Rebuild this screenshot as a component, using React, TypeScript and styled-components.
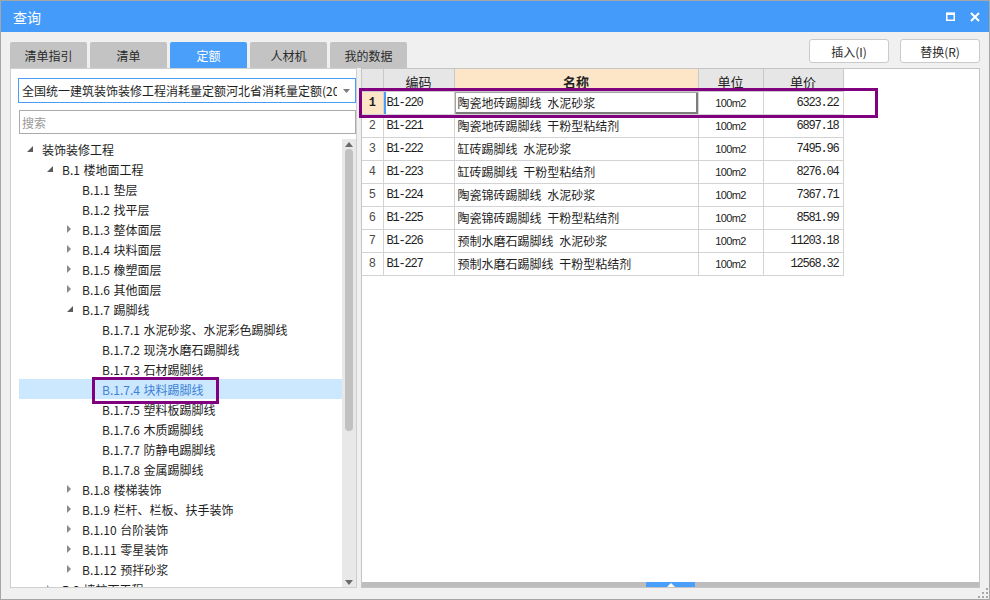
import React from 'react';
import styled, { createGlobalStyle } from 'styled-components';

const GlobalStyle = createGlobalStyle`
  html, body {
    margin: 0;
    padding: 0;
    background: #ffffff;
  }
  body {
    font-family: "Noto Sans CJK SC", "Noto Sans", sans-serif;
    font-size: 12px;
    color: #1e1e1e;
  }
  * {
    box-sizing: border-box;
  }
`;

type TreeNode = {
  label: string;
  level: number;
  toggle?: 'open' | 'closed';
  selected?: boolean;
};

const treeNodes: TreeNode[] = [
  { label: '装饰装修工程', level: 0, toggle: 'open' },
  { label: 'B.1 楼地面工程', level: 1, toggle: 'open' },
  { label: 'B.1.1 垫层', level: 2 },
  { label: 'B.1.2 找平层', level: 2 },
  { label: 'B.1.3 整体面层', level: 2, toggle: 'closed' },
  { label: 'B.1.4 块料面层', level: 2, toggle: 'closed' },
  { label: 'B.1.5 橡塑面层', level: 2, toggle: 'closed' },
  { label: 'B.1.6 其他面层', level: 2, toggle: 'closed' },
  { label: 'B.1.7 踢脚线', level: 2, toggle: 'open' },
  { label: 'B.1.7.1 水泥砂浆、水泥彩色踢脚线', level: 3 },
  { label: 'B.1.7.2 现浇水磨石踢脚线', level: 3 },
  { label: 'B.1.7.3 石材踢脚线', level: 3 },
  { label: 'B.1.7.4 块料踢脚线', level: 3, selected: true },
  { label: 'B.1.7.5 塑料板踢脚线', level: 3 },
  { label: 'B.1.7.6 木质踢脚线', level: 3 },
  { label: 'B.1.7.7 防静电踢脚线', level: 3 },
  { label: 'B.1.7.8 金属踢脚线', level: 3 },
  { label: 'B.1.8 楼梯装饰', level: 2, toggle: 'closed' },
  { label: 'B.1.9 栏杆、栏板、扶手装饰', level: 2, toggle: 'closed' },
  { label: 'B.1.10 台阶装饰', level: 2, toggle: 'closed' },
  { label: 'B.1.11 零星装饰', level: 2, toggle: 'closed' },
  { label: 'B.1.12 预拌砂浆', level: 2, toggle: 'closed' },
  { label: 'B.2 墙柱面工程', level: 1, toggle: 'closed' },
];

const quotaRows = [
  ['B1-220', '陶瓷地砖踢脚线 水泥砂浆', '100m2', '6323.22'],
  ['B1-221', '陶瓷地砖踢脚线 干粉型粘结剂', '100m2', '6897.18'],
  ['B1-222', '缸砖踢脚线 水泥砂浆', '100m2', '7495.96'],
  ['B1-223', '缸砖踢脚线 干粉型粘结剂', '100m2', '8276.04'],
  ['B1-224', '陶瓷锦砖踢脚线 水泥砂浆', '100m2', '7367.71'],
  ['B1-225', '陶瓷锦砖踢脚线 干粉型粘结剂', '100m2', '8581.99'],
  ['B1-226', '预制水磨石踢脚线 水泥砂浆', '100m2', '11203.18'],
  ['B1-227', '预制水磨石踢脚线 干粉型粘结剂', '100m2', '12568.32'],
];

const tabs = ['清单指引', '清单', '定额', '人材机', '我的数据'];

function App() {
  return (
    <>
      <GlobalStyle />
      <Dialog>
        <TitleBar>
          <Title>查询</Title>
          <TitleControls>
            <svg width="9" height="9" viewBox="0 0 9 9">
              <rect x="0.75" y="1.5" width="7.5" height="6.75" fill="none" stroke="#fff" strokeWidth="1.5" />
              <rect x="0" y="0.5" width="9" height="2.5" fill="#fff" />
            </svg>
            <svg width="10" height="10" viewBox="0 0 10 10">
              <path d="M1 1 L9 9 M9 1 L1 9" stroke="#fff" strokeWidth="2" />
            </svg>
          </TitleControls>
        </TitleBar>

        <Toolbar>
          <Tabs>
            {tabs.map((t) => (
              <Tab key={t} $active={t === '定额'}>
                {t}
              </Tab>
            ))}
          </Tabs>
          <Actions>
            <ActionButton>插入(I)</ActionButton>
            <ActionButton>替换(R)</ActionButton>
          </Actions>
        </Toolbar>

        <Content>
          <LeftPanel>
            <Combo>
              <ComboText>全国统一建筑装饰装修工程消耗量定额河北省消耗量定额(2013)</ComboText>
              <ComboArrow>
                <svg width="7" height="4" viewBox="0 0 7 4">
                  <path d="M0 0 H7 L3.5 4 Z" fill="#7a7a7a" />
                </svg>
              </ComboArrow>
            </Combo>
            <SearchBox>搜索</SearchBox>
            <TreeArea>
              <TreeList>
                {treeNodes.map((n) => (
                  <TreeRow key={n.label} $level={n.level} $selected={!!n.selected}>
                    <Toggle>
                      {n.toggle === 'open' && (
                        <svg width="6" height="6" viewBox="0 0 6 6">
                          <path d="M6 0 V6 H0 Z" fill="#5c5c5c" />
                        </svg>
                      )}
                      {n.toggle === 'closed' && (
                        <svg width="5" height="8" viewBox="0 0 5 8">
                          <path d="M0 0 L4 4 L0 8 Z" fill="#8a8a8a" />
                        </svg>
                      )}
                    </Toggle>
                    <TreeLabel>{n.label}</TreeLabel>
                  </TreeRow>
                ))}
              </TreeList>
              <VScroll>
                <ScrollArrow>
                  <svg width="8" height="5" viewBox="0 0 8 5">
                    <path d="M0 5 L4 0 L8 5 Z" fill="#6a6a6a" />
                  </svg>
                </ScrollArrow>
                <ScrollThumb />
                <ScrollTrack />
                <ScrollArrow>
                  <svg width="8" height="5" viewBox="0 0 8 5">
                    <path d="M0 0 L8 0 L4 5 Z" fill="#6a6a6a" />
                  </svg>
                </ScrollArrow>
              </VScroll>
            </TreeArea>
          </LeftPanel>

          <RightPanel>
            <Grid>
              <colgroup>
                <col style={{ width: 21 }} />
                <col style={{ width: 71 }} />
                <col style={{ width: 244 }} />
                <col style={{ width: 65 }} />
                <col style={{ width: 80 }} />
              </colgroup>
              <thead>
                <tr>
                  <HeadCell />
                  <HeadCell>编码</HeadCell>
                  <HeadCell $sorted>名称</HeadCell>
                  <HeadCell>单位</HeadCell>
                  <HeadCell>单价</HeadCell>
                </tr>
              </thead>
              <tbody>
                {quotaRows.map((r, i) => (
                  <tr key={r[0]}>
                    <NumCell $current={i === 0}>{i + 1}</NumCell>
                    <CodeCell $current={i === 0}>{r[0]}</CodeCell>
                    <NameCell $editing={i === 0}>{r[1]}</NameCell>
                    <UnitCell>{r[2]}</UnitCell>
                    <PriceCell>{r[3]}</PriceCell>
                  </tr>
                ))}
              </tbody>
            </Grid>
            <Filler />
            <SplitBar>
              <SplitHandle>
                <svg width="8" height="4" viewBox="0 0 8 4">
                  <path d="M0 4 L4 0 L8 4 Z" fill="#ffffff" />
                </svg>
              </SplitHandle>
            </SplitBar>
          </RightPanel>
        </Content>

        <Grip>
          <svg width="10" height="10" viewBox="0 0 10 10">
            <rect x="8" y="0" width="2" height="2" fill="#a8a8a8" />
            <rect x="4" y="4" width="2" height="2" fill="#a8a8a8" />
            <rect x="8" y="4" width="2" height="2" fill="#a8a8a8" />
            <rect x="0" y="8" width="2" height="2" fill="#a8a8a8" />
            <rect x="4" y="8" width="2" height="2" fill="#a8a8a8" />
            <rect x="8" y="8" width="2" height="2" fill="#a8a8a8" />
          </svg>
        </Grip>

        <Marker $left={358} $top={87} $width={519} $height={30} />
        <Marker $left={91} $top={376} $width={127} $height={27} />
      </Dialog>
    </>
  );
}

export default App;

const Dialog = styled.div`
  position: relative;
  width: 990px;
  height: 600px;
  border: 1px solid #a6a6a6;
  background: #f0f0f0;
  display: flex;
  flex-direction: column;
  overflow: hidden;
`;

const TitleBar = styled.div`
  height: 31px;
  flex: none;
  background: #459bfa;
  display: flex;
  align-items: center;
  justify-content: space-between;
  padding: 0 9px 0 12px;
`;

const Title = styled.div`
  color: #ffffff;
  font-size: 14px;
`;

const TitleControls = styled.div`
  display: flex;
  align-items: center;
  gap: 15px;
  svg {
    display: block;
  }
`;

const Toolbar = styled.div`
  height: 36px;
  flex: none;
  display: flex;
  justify-content: space-between;
  padding: 0 9px;
`;

const Tabs = styled.div`
  display: flex;
  gap: 3px;
  align-self: flex-end;
`;

const Tab = styled.div<{ $active: boolean }>`
  width: 77px;
  height: 26px;
  display: flex;
  align-items: center;
  justify-content: center;
  font-size: 12px;
  border-radius: 2px 2px 0 0;
  background: ${(p) => (p.$active ? '#4a9ffb' : '#c3c3c3')};
  color: ${(p) => (p.$active ? '#ffffff' : '#2a2a2a')};
`;

const Actions = styled.div`
  display: flex;
  gap: 11px;
  padding-top: 7px;
`;

const ActionButton = styled.div`
  width: 80px;
  height: 24px;
  display: flex;
  align-items: center;
  justify-content: center;
  background: #ffffff;
  border: 1px solid #cacaca;
  border-radius: 3px;
  font-size: 12px;
  color: #2a2a2a;
`;

const Content = styled.div`
  flex: 1;
  display: flex;
  gap: 4px;
  padding: 0 9px 11px 9px;
  min-height: 0;
`;

const LeftPanel = styled.div`
  width: 347px;
  flex: none;
  background: #ffffff;
  border: 1px solid #cfcfcf;
  display: flex;
  flex-direction: column;
  padding: 9px 0 0 7px;
  min-height: 0;
`;

const Combo = styled.div`
  height: 25px;
  border: 1px solid #4a9cf6;
  display: flex;
  align-items: center;
  padding-left: 3px;
  flex: none;
`;

const ComboText = styled.div`
  flex: 1;
  overflow: hidden;
  white-space: nowrap;
  font-size: 12px;
  color: #1e1e1e;
`;

const ComboArrow = styled.div`
  width: 18px;
  display: flex;
  justify-content: center;
  svg {
    display: block;
  }
`;

const SearchBox = styled.div`
  height: 24px;
  margin: 7px 0 0 1px;
  border: 1px solid #ababab;
  display: flex;
  align-items: center;
  padding-left: 2px;
  color: #9a9a9a;
  font-size: 12px;
  flex: none;
`;

const TreeArea = styled.div`
  flex: 1;
  display: flex;
  margin-top: 5px;
  min-height: 0;
  padding-left: 1px;
`;

const TreeList = styled.div`
  flex: 1;
  overflow: hidden;
`;

const TreeRow = styled.div<{ $level: number; $selected: boolean }>`
  height: 20px;
  display: flex;
  align-items: center;
  padding-left: ${(p) => 3 + p.$level * 20}px;
  background: ${(p) => (p.$selected ? '#cce8ff' : 'transparent')};
  color: ${(p) => (p.$selected ? '#3b82d6' : '#1e1e1e')};
  white-space: nowrap;
`;

const Toggle = styled.div`
  width: 20px;
  flex: none;
  display: flex;
  align-items: center;
  padding-left: 5px;
  svg {
    display: block;
  }
`;

const TreeLabel = styled.span`
  font-size: 12px;
  word-spacing: 1px;
`;

const VScroll = styled.div`
  width: 14px;
  flex: none;
  background: #e8e8e8;
  display: flex;
  flex-direction: column;
  align-items: center;
`;

const ScrollArrow = styled.div`
  height: 10px;
  width: 100%;
  display: flex;
  align-items: center;
  justify-content: center;
  flex: none;
  svg {
    display: block;
  }
`;

const ScrollThumb = styled.div`
  width: 8px;
  height: 282px;
  border-radius: 4px;
  background: #c1c1c1;
  flex: none;
`;

const ScrollTrack = styled.div`
  flex: 1;
`;

const RightPanel = styled.div`
  flex: 1;
  background: #ffffff;
  border: 1px solid #c4c4c4;
  display: flex;
  flex-direction: column;
  min-width: 0;
`;

const Grid = styled.table`
  border-collapse: collapse;
  table-layout: fixed;
  width: 481px;
`;

const HeadCell = styled.th<{ $sorted?: boolean }>`
  height: 22px;
  padding: 0;
  border: 1px solid #c9c9c9;
  border-top: none;
  background: ${(p) => (p.$sorted ? '#fde6c8' : '#e6e6e6')};
  font-size: 13px;
  font-weight: ${(p) => (p.$sorted ? 700 : 400)};
  color: #222222;
  text-align: center;
  vertical-align: bottom;
  line-height: 19px;
  &:first-child {
    border-left: none;
  }
`;

const BodyCell = styled.td`
  height: 23px;
  padding: 0 3px;
  border: 1px solid #d3d3d3;
  white-space: nowrap;
  overflow: hidden;
  color: #1e1e1e;
  &:first-child {
    border-left: none;
  }
`;

const NumCell = styled(BodyCell)<{ $current: boolean }>`
  padding: 0;
  text-align: center;
  font-family: "Liberation Mono", monospace;
  font-size: 12px;
  background: ${(p) => (p.$current ? '#fde6c8' : '#ffffff')};
  font-weight: ${(p) => (p.$current ? 700 : 400)};
  color: ${(p) => (p.$current ? '#1e1e1e' : '#4a4a4a')};
`;

const CodeCell = styled(BodyCell)<{ $current: boolean }>`
  font-family: "Liberation Mono", monospace;
  font-size: 12px;
  letter-spacing: -1.2px;
  box-shadow: ${(p) => (p.$current ? 'inset 2px 0 0 #4a9cf6' : 'none')};
`;

const NameCell = styled(BodyCell)<{ $editing: boolean }>`
  font-size: 12px;
  word-spacing: 3px;
  box-shadow: ${(p) =>
    p.$editing ? 'inset 1px 1px 0 #a3a3a3, inset -2px -2px 0 #7d7d7d' : 'none'};
`;

const UnitCell = styled(BodyCell)`
  text-align: center;
  font-family: "Liberation Sans", sans-serif;
  font-size: 11px;
  letter-spacing: -0.6px;
`;

const PriceCell = styled(BodyCell)`
  text-align: right;
  font-family: "Liberation Mono", monospace;
  font-size: 12px;
  letter-spacing: -1.2px;
  padding-right: 4px;
`;

const Filler = styled.div`
  flex: 1;
`;

const SplitBar = styled.div`
  height: 5px;
  flex: none;
  background: #bdbdbd;
  display: flex;
  justify-content: center;
`;

const SplitHandle = styled.div`
  width: 49px;
  background: #4a9ffb;
  display: flex;
  align-items: center;
  justify-content: center;
  svg {
    display: block;
  }
`;

const Grip = styled.div`
  position: absolute;
  right: 1px;
  bottom: 1px;
  svg {
    display: block;
  }
`;

const Marker = styled.div<{ $left: number; $top: number; $width: number; $height: number }>`
  position: absolute;
  left: ${(p) => p.$left}px;
  top: ${(p) => p.$top}px;
  width: ${(p) => p.$width}px;
  height: ${(p) => p.$height}px;
  border: 3px solid #800080;
  pointer-events: none;
`;
